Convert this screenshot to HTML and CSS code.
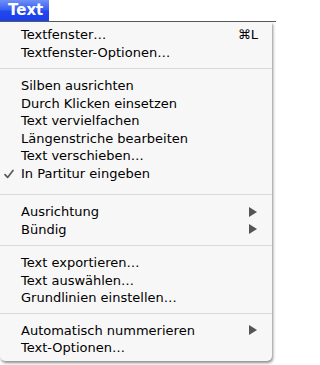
FILE: index.html
```html
<!DOCTYPE html>
<html lang="de">
<head>
<meta charset="utf-8">
<title>Text-Menü</title>
<link rel="stylesheet" href="styles.css">
</head>
<body>
<div class="menubar"><span class="title">Text</span></div>
<div class="menu">
  <div class="item"><span class="label">Textfenster…</span><span class="shortcut">⌘L</span></div>
  <div class="item"><span class="label">Textfenster-Optionen…</span></div>
  <div class="sep"></div>
  <div class="item"><span class="label">Silben ausrichten</span></div>
  <div class="item"><span class="label">Durch Klicken einsetzen</span></div>
  <div class="item"><span class="label">Text vervielfachen</span></div>
  <div class="item"><span class="label">Längenstriche bearbeiten</span></div>
  <div class="item"><span class="label">Text verschieben…</span></div>
  <div class="item checked"><svg class="check" viewBox="0 0 10 10" width="10" height="10"><path d="M1 5.6 L3.6 8.4 L9 1.4" fill="none" stroke="#5a5a5a" stroke-width="1.7" stroke-linecap="round" stroke-linejoin="round"/></svg><span class="label">In Partitur eingeben</span></div>
  <div class="sep sep-wide"></div>
  <div class="item"><span class="label">Ausrichtung</span><span class="arrow"></span></div>
  <div class="item"><span class="label">Bündig</span><span class="arrow"></span></div>
  <div class="sep"></div>
  <div class="item"><span class="label">Text exportieren…</span></div>
  <div class="item"><span class="label">Text auswählen…</span></div>
  <div class="item"><span class="label">Grundlinien einstellen…</span></div>
  <div class="sep sep-narrow"></div>
  <div class="item"><span class="label">Automatisch nummerieren</span><span class="arrow"></span></div>
  <div class="item"><span class="label">Text-Optionen…</span></div>
</div>
</body>
</html>
```
FILE: styles.css
```css
html, body {
  margin: 0;
  padding: 0;
  background: #ffffff;
}
body {
  width: 276px;
  height: 365px;
  overflow: hidden;
  font-family: "DejaVu Sans", "Liberation Sans", sans-serif;
  font-size: 13px;
  color: #000;
}
.menubar {
  height: 21px;
  background: #ffffff;
  border-bottom: 1px solid #5a5a5a;
  display: flex;
}
.title {
  width: 49px;
  height: 21px;
  box-sizing: border-box;
  padding-left: 8px;
  line-height: 21px;
  font-weight: bold;
  font-size: 15px;
  color: #fff;
  background: linear-gradient(#6f90f6, #3a60f3 45%, #2246ee 55%, #1b3fe8);
}
.menu {
  width: 272px;
  background: #f7f7f7;
  padding: 4px 0 4px;
  border-radius: 0 0 5px 5px;
  box-shadow: 1px 2px 3px rgba(0, 0, 0, 0.45);
  position: relative;
}
.item {
  height: 17.5px;
  display: flex;
  align-items: center;
  padding: 0 14px 0 21px;
  position: relative;
}
.label {
  flex: 1;
  white-space: nowrap;
}
.arrow {
  width: 0;
  height: 0;
  border-top: 5px solid transparent;
  border-bottom: 5px solid transparent;
  border-left: 8px solid #555;
  margin-right: 1px;
}
.check {
  position: absolute;
  left: 4px;
  top: 4px;
}
.sep {
  height: 1px;
  background: #dadada;
  margin: 7px 0 8px;
}
.sep-wide {
  margin-top: 12px;
}
.sep-narrow {
  margin-top: 6px;
}
```
